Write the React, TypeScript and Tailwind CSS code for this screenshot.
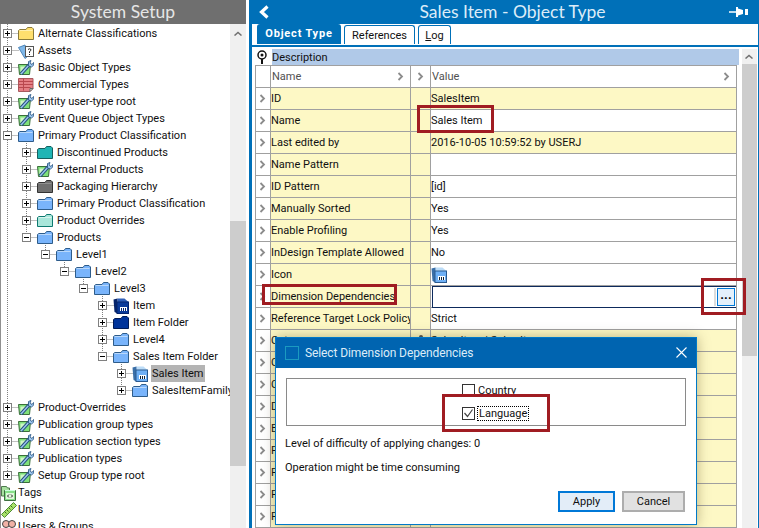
import React from 'react';

type Kind = 'yellow' | 'blue' | 'teal' | 'gray' | 'mint' | 'navy' | 'box' | 'lightbox' | 'wrench' | 'assets' | 'red' | 'tags' | 'units' | 'users';

function Folder({ fill, line, top }: { fill: string; line: string; top: string }) {
  return (
    <svg width="16" height="15" viewBox="0 0 16 15" className="shrink-0">
      <path d="M.5 4.500 2 3.500h6l1.500-2h4.500l1.500 1.500v10.500H.5z" fill={fill} stroke={line} />
      <path d="M1.500 4.500h13" stroke={top} />
    </svg>
  );
}

function Box({ dark }: { dark: boolean }) {
  const front = dark ? '#0a3a9a' : '#6fb0f5';
  const side = dark ? '#06246a' : '#3a6fa8';
  const top = dark ? '#2f5fb8' : '#bcdcf7';
  return (
    <svg width="16" height="16" viewBox="0 0 16 16" className="shrink-0">
      <path d="M4.500 .5h7l4 3.500h-11z" fill={top} />
      <path d="M.5 1.500 4.500 .5v15l-3-1.500z" fill={side} />
      <rect x="4" y="4" width="11.500" height="11.500" fill={front} stroke={dark ? '#05246c' : '#2a5a90'} />
      <rect x="7" y="9" width="7" height="4" fill="#fff" />
      <path d="M8.500 10v3M10.500 10v3M12.500 10v3" stroke={dark ? '#05246c' : '#123'} />
    </svg>
  );
}

function Wrench() {
  return (
    <svg width="16" height="15" viewBox="0 0 16 15" className="shrink-0">
      <path d="M.5 4.500h12l-1 10H1.500z" fill="#7fe07a" stroke="#3b6e3b" />
      <path d="M2.500 6.500h6l-4 6h-2z" fill="#cdf6c6" />
      <path d="M3 14 12 4" stroke="#24507f" strokeWidth="3.400" />
      <path d="M3 14 12 4" stroke="#9cc6ee" strokeWidth="1.400" />
      <path d="M10.500 1.500 13 .5l-1 2.500 2 1.500 1.500-2 .3 2.500-2.300 2-3-1z" fill="#9cc6ee" stroke="#24507f" strokeWidth=".8" />
    </svg>
  );
}

function Assets() {
  return (
    <svg width="16" height="16" viewBox="0 0 16 16" className="shrink-0">
      <path d="M.5 4.500 7 2l3 11-3 2.500z" fill="#7fb8ea" stroke="#4f86b8" />
      <rect x="7.500" y="3.500" width="8" height="10" fill="#fff" stroke="#555" />
      <path d="M10 6.500q1.500-1.500 3 0 0 1.500-1.500 2v1.500M11.500 11v1" fill="none" stroke="#222" />
    </svg>
  );
}

function RedList() {
  return (
    <svg width="16" height="15" viewBox="0 0 16 15" className="shrink-0">
      <path d="M.5 1.500h14.500v10l-3 3H.5z" fill="#e57f85" stroke="#a85a5e" />
      <path d="M.5 4.500h14.500M.5 7.500h14.500M.5 10.500h12M5.500 1.500v12" stroke="#b9474e" />
      <path d="m12 14.500 3-3h-3z" fill="#eee" stroke="#666" />
    </svg>
  );
}

function Tags() {
  return (
    <svg width="16" height="16" viewBox="0 0 16 16" className="shrink-0">
      <path d="M.5 1.500h5l1 1.500h2V6H4v5H.5z" fill="#a8e0a0" stroke="#4d7a4d" />
      <path d="M3.500 5.500h11v10h-11z" fill="#86e08a" stroke="#3e6e40" />
      <path d="M4 5.500h10" stroke="#cfd" />
      <rect x="5" y="8" width="8" height="6" fill="#dff8dc" />
      <path d="M8 9.500 6.500 11 8 12.500M10 9.500l1.500 1.500-1.500 1.500" fill="none" stroke="#222" />
    </svg>
  );
}

function Units() {
  return (
    <svg width="16" height="16" viewBox="0 0 16 16" className="shrink-0">
      <path d="M.5 12.500 12.500.5l3 3-12 12z" fill="#a9e26a" stroke="#4f8a35" />
      <path d="m4 10 1.500 1.500M6 8l1.500 1.500M8 6l1.500 1.500M10 4l1.500 1.500" stroke="#3a6a25" />
    </svg>
  );
}

function Users() {
  return (
    <svg width="16" height="16" viewBox="0 0 16 16" className="shrink-0">
      <circle cx="5" cy="5" r="3.500" fill="#f1b2a6" stroke="#444" />
      <circle cx="11" cy="5" r="3.500" fill="#f1b2a6" stroke="#444" />
      <path d="M1 15q4-8 7 0M7 15q4-8 8 0" fill="#c9454c" stroke="#444" />
    </svg>
  );
}

function Icon({ k }: { k: Kind }) {
  switch (k) {
    case 'yellow': return <Folder fill="#ffdf6e" line="#8a7a3a" top="#fff0b0" />;
    case 'blue': return <Folder fill="#79b4fb" line="#2e5c8a" top="#b9d8fb" />;
    case 'teal': return <Folder fill="#1fb5b5" line="#17605f" top="#1fb5b5" />;
    case 'gray': return <Folder fill="#707070" line="#333" top="#909090" />;
    case 'mint': return <Folder fill="#a9e6da" line="#0e7a70" top="#d8f5ee" />;
    case 'navy': return <Folder fill="#00339a" line="#001a55" top="#00339a" />;
    case 'box': return <Box dark />;
    case 'lightbox': return <Box dark={false} />;
    case 'wrench': return <Wrench />;
    case 'assets': return <Assets />;
    case 'red': return <RedList />;
    case 'tags': return <Tags />;
    case 'units': return <Units />;
    case 'users': return <Users />;
  }
}

function Expander({ open }: { open: boolean }) {
  return (
    <svg width="9" height="9" viewBox="0 0 9 9" className="shrink-0">
      <rect x=".5" y=".5" width="8" height="8" fill="#fff" stroke="#808080" />
      <path d="M2 4.500h5" stroke="#000" />
      {!open && <path d="M4.500 2v5" stroke="#000" />}
    </svg>
  );
}

const tree: { t: string; d: number; k: Kind; open?: boolean; none?: boolean; sel?: boolean }[] = [
  { t: 'Alternate Classifications', d: 0, k: 'yellow' },
  { t: 'Assets', d: 0, k: 'assets' },
  { t: 'Basic Object Types', d: 0, k: 'wrench' },
  { t: 'Commercial Types', d: 0, k: 'red' },
  { t: 'Entity user-type root', d: 0, k: 'wrench' },
  { t: 'Event Queue Object Types', d: 0, k: 'wrench' },
  { t: 'Primary Product Classification', d: 0, k: 'blue', open: true },
  { t: 'Discontinued Products', d: 1, k: 'teal' },
  { t: 'External Products', d: 1, k: 'wrench' },
  { t: 'Packaging Hierarchy', d: 1, k: 'gray' },
  { t: 'Primary Product Classification', d: 1, k: 'blue' },
  { t: 'Product Overrides', d: 1, k: 'mint' },
  { t: 'Products', d: 1, k: 'blue', open: true },
  { t: 'Level1', d: 2, k: 'blue', open: true },
  { t: 'Level2', d: 3, k: 'blue', open: true },
  { t: 'Level3', d: 4, k: 'blue', open: true },
  { t: 'Item', d: 5, k: 'box' },
  { t: 'Item Folder', d: 5, k: 'navy' },
  { t: 'Level4', d: 5, k: 'blue' },
  { t: 'Sales Item Folder', d: 5, k: 'blue', open: true },
  { t: 'Sales Item', d: 6, k: 'lightbox', sel: true },
  { t: 'SalesItemFamily', d: 6, k: 'blue' },
  { t: 'Product-Overrides', d: 0, k: 'wrench' },
  { t: 'Publication group types', d: 0, k: 'wrench' },
  { t: 'Publication section types', d: 0, k: 'wrench' },
  { t: 'Publication types', d: 0, k: 'wrench' },
  { t: 'Setup Group type root', d: 0, k: 'wrench' },
  { t: 'Tags', d: -1, k: 'tags', none: true },
  { t: 'Units', d: -1, k: 'units', none: true },
  { t: 'Users & Groups', d: -1, k: 'users', none: true },
];

const rows: { n: string; v?: string; y?: boolean; icon?: boolean; dim?: boolean; mark?: boolean }[] = [
  { n: 'ID', v: 'SalesItem', y: true },
  { n: 'Name', v: 'Sales Item' },
  { n: 'Last edited by', v: '2016-10-05 10:59:52 by USERJ', y: true },
  { n: 'Name Pattern' },
  { n: 'ID Pattern', v: '[id]' },
  { n: 'Manually Sorted', v: 'Yes' },
  { n: 'Enable Profiling', v: 'Yes' },
  { n: 'InDesign Template Allowed', v: 'No' },
  { n: 'Icon', icon: true },
  { n: 'Dimension Dependencies', dim: true },
  { n: 'Reference Target Lock Policy', v: 'Strict' },
  { n: 'Category', v: 'Sales Item | Sales Item', y: true, mark: true },
  { n: 'Catalog', y: true },
  { n: 'Class', y: true },
  { n: 'Default', y: true },
  { n: 'Export', y: true },
  { n: 'Format', y: true },
  { n: 'Filter', y: true },
  { n: 'Family', y: true },
  { n: 'Field', y: true },
];

function Chev() {
  return (
    <svg width="7" height="9" viewBox="0 0 7 9" className="shrink-0">
      <path d="m1.500 1 3.500 3.500L1.500 8" fill="none" stroke="#8c8c8c" strokeWidth="1.800" />
    </svg>
  );
}

const connectors = [
  'M7.5 24V475', 'M26.5 143V237', 'M45.5 245V254', 'M64.5 262V271', 'M83.5 279V288', 'M102.5 296V356', 'M121.5 364V390',
];

export default function App() {
  return (
    <div className="relative w-[759px] h-[528px] overflow-hidden bg-white flex [font-family:Roboto,sans-serif] text-[11px] text-[#101010]">
      {/* Left panel */}
      <aside className="relative w-[246px] h-full shrink-0 flex flex-col">
        <div className="h-[24px] bg-[#6f6f6f] text-[#e6e6e6] text-[17.5px] leading-[24px] text-center [font-family:Lato,sans-serif]">System Setup</div>
        <div className="relative flex-1 flex overflow-hidden border-l border-[#909090]">
          <div className="relative flex-1 overflow-hidden pt-[1px] -ml-[1px]">
            <svg width="230" height="504" viewBox="0 24 230 504" className="absolute left-0 top-0">
              <g stroke="#808080" strokeDasharray="1 1" fill="none">
                {connectors.map((d) => <path key={d} d={d} />)}
                {tree.filter((r) => !r.none).map((r, i) => {
                  const c = 7.5 + 19 * r.d;
                  const y = 33.5 + 17 * i;
                  return <path key={i} d={`M${c + 4} ${y}H${c + 11}`} />;
                })}
              </g>
            </svg>
            {tree.map((r, i) => (
              <div key={i} className="relative flex items-center h-[17px] whitespace-nowrap" style={{ marginLeft: r.none ? 1 : 3 + 19 * r.d }}>
                {!r.none && <Expander open={!!r.open} />}
                {!r.none && <span className="w-[6px] shrink-0" />}
                <Icon k={r.k} />
                <span className={r.sel ? 'ml-[3px] pl-[1px] pr-[1px] h-[17px] leading-[17px] bg-[#b4b4b4] w-[54px]' : r.none ? 'ml-[1px] leading-[15px] -mt-[1px]' : 'ml-[4px] leading-[15px] -mt-[1px]'}>{r.t}</span>
              </div>
            ))}
          </div>
          <div className="relative w-[16px] h-full bg-[#f0f0f0] shrink-0">
            <svg width="8" height="5" viewBox="0 0 8 5" className="absolute left-[4px] top-[7px]">
              <path d="m.5 4.500 3.500-3 3.500 3" fill="none" stroke="#707070" strokeWidth="1.500" />
            </svg>
            <div className="absolute left-0 top-[197px] w-full h-[245px] bg-[#cdcdcd]" />
          </div>
        </div>
      </aside>

      {/* Right panel */}
      <main className="absolute left-[249px] top-0 w-[510px] h-[528px] border-l-[3px] border-r border-[#0070b8] flex flex-col">
        <div className="relative h-[24px] -ml-[3px] bg-[#0070b8] text-[#dcecf8] text-[17.5px] leading-[24px] text-center [font-family:Lato,sans-serif] shrink-0 pl-[17px] -mr-[1px]">
          <span>Sales Item - Object Type</span>
          <svg width="12" height="14" viewBox="0 0 12 14" className="absolute left-[9px] top-[5px]">
            <path d="M9.500 1.500 3.500 7l6 5.500" fill="none" stroke="#fff" strokeWidth="3.200" />
          </svg>
          <svg width="20" height="12" viewBox="0 0 20 12" className="absolute left-[480px] top-[6px]">
            <path d="M0 6h7" stroke="#fff" strokeWidth="1.500" />
            <path d="M7 1h2v1.500l5 1.500v4l-5 1.500V11H7z" fill="#fff" />
            <path d="M16 3h3v6h-3z" fill="#fff" />
          </svg>
        </div>
        <div className="h-[23px] flex items-end pl-[5px] border-b-2 border-[#0070b8] shrink-0 gap-[3px] pb-[1px]">
          <div className="w-[84px] h-[20px] bg-[#0070b8] rounded-t-[3px] text-white font-bold text-[11px] leading-[20px] text-center tracking-[0.8px]">Object Type</div>
          <div className="w-[71px] h-[19px] border border-b-0 border-[#0070b8] rounded-t-[3px] text-center leading-[19px]">References</div>
          <div className="w-[33px] h-[19px] border border-b-0 border-[#0070b8] rounded-t-[3px] text-center leading-[19px]"><span className="underline">L</span>og</div>
        </div>
        <div className="relative flex-1 min-h-0">
          <svg width="12" height="15" viewBox="0 0 12 15" className="absolute left-[4px] top-[3px]">
            <circle cx="6" cy="5" r="4" fill="#fff" stroke="#111" strokeWidth="1.500" />
            <circle cx="6" cy="5" r="1.500" fill="#111" />
            <path d="M6 9v5" stroke="#111" strokeWidth="2" />
          </svg>
          <div className="absolute left-[20px] top-[2px] w-[467px] h-[16px] bg-[#b0c9e8] leading-[17px]">Description</div>
          {/* Table */}
          <div className="absolute left-[3px] top-[18px] w-[482px] h-[480px] overflow-hidden border-l border-r border-t border-[#a0a0a0]">
            <div className="grid grid-cols-[15px_140px_20px_1fr] h-[22px] border-b border-[#a0a0a0] text-[#505050]">
              <div className="border-r border-[#a0a0a0]" />
              <div className="border-r border-[#a0a0a0] flex items-center justify-between pr-[6px] pl-[1px]"><span className="pt-[1px]">Name</span><Chev /></div>
              <div className="border-r border-[#a0a0a0] flex items-center justify-center"><Chev /></div>
              <div className="flex items-center justify-between pr-[6px] pl-[1px]"><span className="pt-[1px]">Value</span><Chev /></div>
            </div>
            {rows.map((r) => (
              <div key={r.n} className="grid grid-cols-[15px_140px_20px_1fr] h-[22px] border-b border-[#a0a0a0]">
                <div className="border-r border-[#a0a0a0] flex items-center justify-center pr-[1px]"><Chev /></div>
                <div className="border-r border-[#a0a0a0] bg-[#fdf8c5] flex items-center whitespace-nowrap overflow-hidden pt-[1px]">{r.n}</div>
                <div className="relative border-r border-[#a0a0a0] bg-[#fdf8c5]">
                  {r.mark && <span className="absolute left-[8px] top-[5px] w-[4px] h-[4px] bg-[#555] rounded-full" />}
                </div>
                <div className={`relative flex items-center pt-[1px] ${r.y ? 'bg-[#fdf8c5]' : 'bg-white'}`}>
                  {r.v}
                  {r.icon && <Box dark={false} />}
                  {r.dim && (
                    <div className="absolute left-[1px] -right-[1px] top-0 h-[22px] bg-white border-[1.5px] border-[#0d2a5c] flex justify-end items-center pr-[1px]">
                      <div className="w-[2px] h-[18px] bg-[#dcdcdc] mr-[1px]" />
                      <div className="w-[18px] h-[18px] bg-[#e4f0fb] border border-[#0078d7] text-[#000] font-bold text-[13px] leading-[12px] text-center">...</div>
                    </div>
                  )}
                </div>
              </div>
            ))}
          </div>
          {/* Scrollbar */}
          <div className="absolute left-[490px] top-[2px] w-[15px] h-[480px] bg-[#f0f0f0]">
            <svg width="8" height="5" viewBox="0 0 8 5" className="absolute left-[3px] top-[5px]">
              <path d="m.5 4.500 3.500-3 3.500 3" fill="none" stroke="#707070" strokeWidth="1.500" />
            </svg>
            <div className="absolute left-0 top-[15px] w-full h-[292px] bg-[#cdcdcd]" />
          </div>
        </div>
      </main>

      {/* Dialog */}
      <div className="absolute left-[275px] top-[337px] w-[422px] h-[188px] bg-white border border-[#0078c8] shadow-[0_0_12px_rgba(60,50,0,0.35)]">
        <div className="relative h-[30px] bg-[#0064b0] flex items-center text-[#dcecf8] text-[12px] tracking-[-0.1px]">
          <div className="ml-[9px] w-[14px] h-[14px] border border-[#1b9ac0]" />
          <span className="ml-[6px]">Select Dimension Dependencies</span>
          <svg width="11" height="11" viewBox="0 0 11 11" className="absolute left-[400px] top-[9px]">
            <path d="m.5.5 10 10M10.500.5l-10 10" stroke="#fff" strokeWidth="1.100" />
          </svg>
        </div>
        <div className="absolute left-[10px] top-[40px] w-[400px] h-[48px] border border-[#8a8a8a]">
          <div className="absolute left-[175px] top-[5px] flex items-center h-[13px]">
            <span className="w-[13px] h-[13px] border border-[#333] bg-white" />
            <span className="ml-[3px] leading-[13px]">Country</span>
          </div>
          <div className="absolute left-[175px] top-[28px] flex items-center h-[13px]">
            <span className="relative w-[13px] h-[13px] border border-[#333] bg-white">
              <svg width="11" height="11" viewBox="0 0 11 11" className="absolute left-0 top-0">
                <path d="m1.500 5 3 3.500 5-7" fill="none" stroke="#444" strokeWidth="1.200" />
              </svg>
            </span>
            <span className="ml-[2px] px-[1px] leading-[13px] border border-dotted border-black">Language</span>
          </div>
        </div>
        <div className="absolute left-[9px] top-[99px] leading-[14px]">Level of difficulty of applying changes: 0</div>
        <div className="absolute left-[9px] top-[123px] leading-[14px]">Operation might be time consuming</div>
        <div className="absolute left-[282px] top-[153px] w-[57px] h-[21px] bg-[#e3edf8] border-2 border-[#0078d7] text-center leading-[17px]">Apply</div>
        <div className="absolute left-[346px] top-[153px] w-[63px] h-[21px] bg-[#e1e1e1] border-2 border-[#adadad] text-center leading-[17px]">Cancel</div>
      </div>

      {/* Annotation boxes */}
      <div className="absolute left-[417px] top-[105px] w-[77px] h-[28px] border-[3px] border-[#a01c22]" />
      <div className="absolute left-[262px] top-[284px] w-[135px] h-[21px] border-[3px] border-[#a01c22]" />
      <div className="absolute left-[701px] top-[278px] w-[45px] h-[37px] border-[3px] border-[#a01c22]" />
      <div className="absolute left-[442px] top-[394px] w-[108px] h-[38px] border-[3px] border-[#a01c22]" />
    </div>
  );
}
